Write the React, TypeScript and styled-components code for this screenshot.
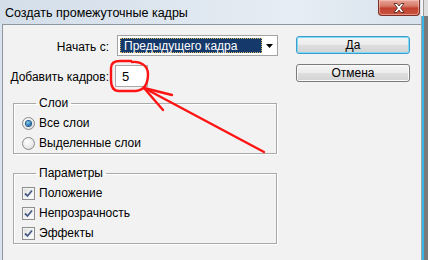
import React from 'react';
import styled, { createGlobalStyle, css } from 'styled-components';

const GlobalStyle = createGlobalStyle`
  html, body {
    margin: 0;
    padding: 0;
    background: #f2f2f2;
  }
  body {
    font-family: "Liberation Sans", Arial, sans-serif;
    font-size: 12px;
    color: #000;
  }
`;

const Screen = styled.div`
  position: relative;
  width: 428px;
  height: 260px;
  overflow: hidden;
  display: flex;
`;

const Window = styled.div`
  flex: 1;
  display: flex;
  flex-direction: column;
  background: #dae3ed;
`;

const TitleBar = styled.div`
  flex: none;
  height: 24px;
  display: flex;
  align-items: flex-start;
  background: linear-gradient(to right, #d3dee9 0%, #dfe7f0 45%, #e6edf4 70%, #d8e2ec 100%);
`;

const Title = styled.div`
  padding: 3px 0 0 5px;
  font-size: 12.5px;
  line-height: 20px;
  color: #000;
  white-space: nowrap;
`;

const CloseButton = styled.div`
  margin-left: auto;
  margin-right: 1px;
  width: 42px;
  height: 16px;
  display: flex;
  align-items: center;
  justify-content: center;
  border: 1px solid #7a3025;
  border-top: none;
  border-radius: 0 0 4px 4px;
  box-sizing: border-box;
  background: linear-gradient(#e7a497 0%, #d67a69 40%, #c2412f 55%, #cb5442 100%);
  box-shadow: inset 0 0 0 1px rgba(255, 210, 200, 0.5);
`;

const RightEdge = styled.div`
  flex: none;
  width: 7px;
  display: flex;
  flex-direction: column;
  background: linear-gradient(to right, #9aa4ad 0, #9aa4ad 1px, #37b6e6 1px, #37b6e6 3px, #7a7a7a 3px);
`;

const EdgeCap = styled.div`
  height: 16px;
  background: linear-gradient(to right, #f4f4f4 0, #f4f4f4 2px, #9a9a9a 2px, #9a9a9a 3px, #dedede 3px);
`;

const Client = styled.div`
  flex: 1;
  margin-left: 2px;
  border-top: 1px solid #8e969f;
  border-left: 1px solid #8e969f;
  background: #f2f2f2;
  display: flex;
  gap: 19px;
  padding: 10px 10px 0 10px;
`;

const MainColumn = styled.div`
  width: 264px;
  display: flex;
  flex-direction: column;
`;

const Form = styled.div`
  display: grid;
  grid-template-columns: 98px auto;
  column-gap: 4px;
  row-gap: 9px;
  align-items: center;
  justify-items: start;
`;

const Label = styled.div`
  justify-self: end;
  white-space: nowrap;
  padding: 2px 2px 0 0;
`;

const Select = styled.div`
  margin-left: 2px;
  width: 161px;
  height: 21px;
  box-sizing: border-box;
  border: 1px solid #a3a3a3;
  background: #fff;
  display: flex;
  align-items: stretch;
  padding: 2px 0 2px 2px;
`;

const SelectValue = styled.div`
  flex: 1;
  background: #16396b;
  border: 1px dotted #d9b860;
  color: #fff;
  padding-left: 3px;
  display: flex;
  align-items: center;
  white-space: nowrap;
`;

const SelectArrow = styled.div`
  width: 15px;
  display: flex;
  align-items: center;
  justify-content: center;
`;

const NumberInput = styled.div`
  width: 33px;
  height: 22px;
  box-sizing: border-box;
  border: 1px solid #ababab;
  background: #fff;
  padding-left: 6px;
  display: flex;
  align-items: center;
  font-size: 13px;
`;

const Group = styled.fieldset<{ $gap: number }>`
  margin: ${({ $gap }) => $gap}px 0 0 0;
  padding: 3px 0 0 8px;
  min-inline-size: 0;
  border: 1px solid #a9a9a9;
  box-shadow: 1px 1px 0 #fff, inset 1px 1px 0 #fff;
  display: flex;
  flex-direction: column;
`;

const Legend = styled.legend`
  margin-left: 14px;
  padding: 0 3px;
  line-height: 14px;
`;

const Option = styled.div`
  height: 20px;
  display: flex;
  align-items: center;
  gap: 4px;
  white-space: nowrap;
`;

const Radio = styled.span<{ $checked?: boolean }>`
  width: 13px;
  height: 13px;
  box-sizing: border-box;
  border-radius: 50%;
  border: 1px solid #8a8a8a;
  background: radial-gradient(circle at 40% 35%, #ffffff 0%, #e8e8e8 60%, #cfcfcf 100%);
  display: flex;
  align-items: center;
  justify-content: center;
  ${({ $checked }) =>
    $checked &&
    css`
      &::after {
        content: '';
        width: 5px;
        height: 5px;
        border-radius: 50%;
        background: radial-gradient(circle at 40% 35%, #8fd3f5 0%, #2a78b4 55%, #134b7c 100%);
        box-shadow: 0 0 0 1px #1d5a8c;
      }
    `}
`;

const Check = styled.span`
  width: 13px;
  height: 13px;
  box-sizing: border-box;
  border: 1px solid #8f8f8f;
  background: linear-gradient(135deg, #dcdcdc 0%, #f4f4f4 60%, #ffffff 100%);
  box-shadow: inset 0 0 0 1px #f3f3f3;
  display: flex;
  align-items: center;
  justify-content: center;
`;

const ButtonColumn = styled.div`
  width: 114px;
  padding-top: 1px;
  display: flex;
  flex-direction: column;
  gap: 10px;
`;

const Button = styled.div<{ $default?: boolean }>`
  height: 18px;
  box-sizing: border-box;
  border: 1px solid #7a7a7a;
  border-radius: 3px;
  background: linear-gradient(#f4f4f4 0%, #ececec 50%, #dedede 51%, #d3d3d3 100%);
  box-shadow: inset 0 0 0 1px #fbfbfb;
  display: flex;
  align-items: center;
  justify-content: center;
  ${({ $default }) =>
    $default &&
    css`
      border-color: #3d9ccc;
      box-shadow: inset 0 0 0 1px #7fdcf6;
    `}
`;

const Annotation = styled.svg`
  position: absolute;
  inset: 0;
  pointer-events: none;
`;

const CheckMark = () => (
  <svg width="9" height="9" viewBox="0 0 9 9">
    <path d="M1 4.5 L3.5 7 L8 1.5" fill="none" stroke="#4a5d86" strokeWidth="1.8" />
  </svg>
);

const CloseGlyph = () => (
  <svg width="12" height="10" viewBox="0 0 12 10">
    <path
      d="M1 0.5 H4 L6 3 L8 0.5 H11 L7.6 5 L11 9.5 H8 L6 7 L4 9.5 H1 L4.4 5 Z"
      fill="#fff"
      stroke="#5a2a24"
      strokeWidth="0.9"
      strokeLinejoin="round"
    />
  </svg>
);

const DownArrow = () => (
  <svg width="7" height="4" viewBox="0 0 7 4">
    <path d="M0 0 H7 L3.5 4 Z" fill="#000" />
  </svg>
);

export default function App() {
  return (
    <>
      <GlobalStyle />
      <Screen>
        <Window>
          <TitleBar>
            <Title>Создать промежуточные кадры</Title>
            <CloseButton>
              <CloseGlyph />
            </CloseButton>
          </TitleBar>
          <Client>
            <MainColumn>
              <Form>
                <Label>Начать с:</Label>
                <Select>
                  <SelectValue>Предыдущего кадра</SelectValue>
                  <SelectArrow>
                    <DownArrow />
                  </SelectArrow>
                </Select>
                <Label>Добавить кадров:</Label>
                <NumberInput>5</NumberInput>
              </Form>
              <Group $gap={9}>
                <Legend>Слои</Legend>
                <Option>
                  <Radio $checked />
                  Все слои
                </Option>
                <Option>
                  <Radio />
                  Выделенные слои
                </Option>
              </Group>
              <Group $gap={12}>
                <Legend>Параметры</Legend>
                <Option>
                  <Check>
                    <CheckMark />
                  </Check>
                  Положение
                </Option>
                <Option>
                  <Check>
                    <CheckMark />
                  </Check>
                  Непрозрачность
                </Option>
                <Option>
                  <Check>
                    <CheckMark />
                  </Check>
                  Эффекты
                </Option>
              </Group>
            </MainColumn>
            <ButtonColumn>
              <Button $default>Да</Button>
              <Button>Отмена</Button>
            </ButtonColumn>
          </Client>
        </Window>
        <RightEdge>
          <EdgeCap />
        </RightEdge>
        <Annotation width="428" height="260" viewBox="0 0 428 260">
          <g fill="none" stroke="#ff1414" strokeWidth="2.4" strokeLinecap="round" strokeLinejoin="round">
            <path d="M132 62 C141 61 148 66 148 74 C148 84 145 90 136 91 L119 91 C113 91 111 86 111 80 L111 68 C111 63 114 61 120 61 L131 61" />
            <path d="M144 88 L264 152" />
            <path d="M144 88 L172 95" />
            <path d="M144 88 L163 110" />
          </g>
        </Annotation>
      </Screen>
    </>
  );
}
